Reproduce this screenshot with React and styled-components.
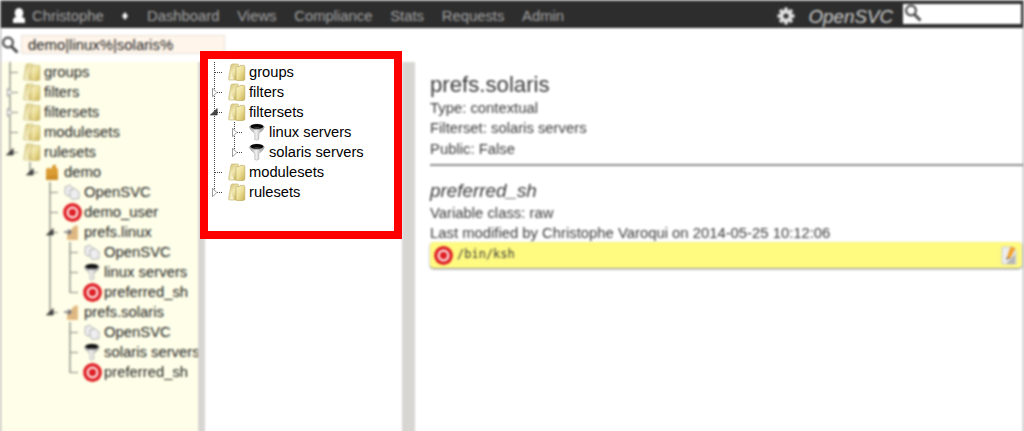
import React from "react";
import styled, { createGlobalStyle } from "styled-components";

const GlobalStyle = createGlobalStyle`
  * { box-sizing: border-box; }
  html, body { margin: 0; background: #fff; overflow: hidden; }
  body { font: 14.7px "Liberation Sans", Arial, sans-serif; color: #000; }
  svg { display: block; flex: none; }
`;

const Stage = styled.div`
  position: relative;
  width: 1024px;
  height: 431px;
  overflow: hidden;
`;

const Page = styled.div`
  display: flex;
  flex-direction: column;
  height: 436px;
  border: 1px solid #999;
  border-bottom: 0;
  background: #fff;
  color: #1c1c1c;
  font-size: 14.83px;
  filter: blur(1.25px);
`;

const Header = styled.header`
  display: flex;
  align-items: center;
  height: 27px;
  flex: none;
  padding: 2px 2px 0 11px;
  background: #2d2d2d;
  color: #a3a3a3;
`;

const UserName = styled.span`
  margin-left: 6px;
  width: 90px;
`;

const Nav = styled.nav`
  display: flex;
  flex: 1;
  gap: 17.7px;
  margin-left: 19px;
`;

const Brand = styled.span`
  margin: 2px 10px 0 13px;
  font-size: 18.8px;
  font-style: italic;
  color: #ccc;
`;

const HeaderSearch = styled.div`
  width: 118px;
  height: 20px;
  margin-bottom: 3px;
  padding-left: 1px;
  background: #fff;
`;

const FilterBar = styled.div`
  display: flex;
  align-items: center;
  height: 34px;
  flex: none;
  gap: 2px;
`;

const FilterInput = styled.div`
  width: 204px;
  height: 19px;
  margin-bottom: 1px;
  padding: 0 6px;
  border: 1px solid #e9e1d8;
  background: #fff5ea;
  font-size: 14.9px;
  line-height: 18px;
`;

const Columns = styled.div`
  display: flex;
  flex: 1;
`;

const TreePane = styled.aside`
  width: 197px;
  padding-left: 1px;
  background: #ffffe9;
  white-space: nowrap;
`;

const Splitter = styled.div`
  width: ${(p) => p.$width}px;
  background: #d8d6d3;
`;

const MiddlePane = styled.div`
  width: 197px;
`;

const Details = styled.main`
  flex: 1;
  padding: 9px 0 0 15px;
  color: #3a3a3a;
`;

const Title = styled.h1`
  margin: 0;
  height: 27px;
  font-size: 22.2px;
  line-height: 27px;
  font-weight: normal;
`;

const Line = styled.div`
  height: 20.3px;
  line-height: 20.3px;
`;

const Rule = styled.hr`
  margin: 5px 0 13px;
  border: 0;
  height: 2px;
  background: #8e8e8e;
`;

const Subtitle = styled.h2`
  margin: 0;
  height: 24px;
  font-size: 18.85px;
  line-height: 24px;
  font-style: italic;
  font-weight: normal;
`;

const ValueBar = styled.div`
  display: flex;
  align-items: center;
  justify-content: space-between;
  height: 26px;
  margin: -1px 1px 0 0;
  padding: 0 4px 0 4px;
  border-radius: 4px;
  background: #fffa80;
  box-shadow: 0 1px 2px #777;
`;

const Value = styled.div`
  display: flex;
  gap: 4px;
  font: 12px/17px "DejaVu Sans Mono", monospace;
`;

const Spotlight = styled.section`
  position: absolute;
  left: 200px;
  top: 51px;
  width: 202px;
  height: 188px;
  padding-top: 3px;
  border: 8px solid #f00;
  background: #fff;
`;

const TreeList = styled.div`
  margin-left: ${(p) => p.$offset || 0}px;
`;

const Row = styled.div`
  display: flex;
  align-items: center;
  height: 20px;
`;

const IconCell = styled.span`
  display: flex;
  flex: none;
  justify-content: center;
  width: 20px;
  margin-right: 2px;
`;

const Label = styled.span`
  line-height: 20px;
`;

const UserIcon = () => (
  <svg width="14" height="16" viewBox="0 0 14 16" fill="#fff">
    <ellipse cx="7" cy="5" rx="4.3" ry="5" />
    <path d="M1 15V12Q1 9 5 9H9Q13 9 13 12V15Z" />
  </svg>
);

const Diamond = () => (
  <svg width="6" height="8" viewBox="0 0 6 8"><path d="M3 0L6 4L3 8L0 4Z" fill="#f4f4f4" /></svg>
);

const Gear = () => (
  <svg width="18" height="18" viewBox="0 0 18 18">
    <g stroke="#e2e2e2" strokeWidth="3.6">
      <path d="M9 0.5V17.5M0.5 9H17.5M3 3L15 15M15 3L3 15" />
    </g>
    <circle cx="9" cy="9" r="6.3" fill="#e2e2e2" />
    <circle cx="9" cy="9" r="2.6" fill="#333" />
  </svg>
);

const Magnifier = () => (
  <svg width="18" height="18" viewBox="0 0 18 18" fill="none" stroke="#4a4a4a">
    <circle cx="7" cy="6.5" r="4.9" strokeWidth="2.2" />
    <path d="M10.5 10.5L16.5 16.5" strokeWidth="3" />
  </svg>
);

const Gradients = () => (
  <svg width="0" height="0" style={{ position: "absolute" }}>
    <defs>
      <linearGradient id="folderFront" x1="0" y1="0" x2="1" y2="1">
        <stop offset="0" stopColor="#fbf5cb" />
        <stop offset="0.5" stopColor="#eddf98" />
        <stop offset="1" stopColor="#c7b152" />
      </linearGradient>
      <linearGradient id="folderBack" x1="0" y1="0" x2="0.6" y2="1">
        <stop offset="0" stopColor="#d0be70" />
        <stop offset="0.55" stopColor="#f1e8b2" />
        <stop offset="1" stopColor="#cfbc6c" />
      </linearGradient>
      <linearGradient id="funnelMetal" x1="0" y1="0" x2="1" y2="0">
        <stop offset="0" stopColor="#999" />
        <stop offset="0.45" stopColor="#f2f2f2" />
        <stop offset="1" stopColor="#858585" />
      </linearGradient>
    </defs>
  </svg>
);

const Folder = () => (
  <svg width="18" height="20" viewBox="0 0 18 20">
    <path d="M2.8 4Q2.8 2 4.4 2H9.2Q10.6 2 10.6 3.2V16.6L8.6 18H1.6Q0.4 18 0.6 16.6Z" fill="url(#folderBack)" stroke="#cbbb7c" strokeWidth="0.7" />
    <path d="M1.4 17.4L3.7 12L6 17.6Z" fill="#f6f0cf" />
    <path d="M8 5.6Q8 4.6 9 4.6H11.2L12.2 3.4H15.6Q16.8 3.4 16.8 4.6V16.8Q16.8 18.5 15.2 18.5H9.2Q8 18.5 8 17.2Z" fill="url(#folderFront)" stroke="#bfae62" strokeWidth="0.7" />
  </svg>
);

const Funnel = () => (
  <svg width="18" height="20" viewBox="0 0 18 20">
    <path d="M1.4 5Q2 8 6.8 11.5V17.6Q8.8 19 10.8 17.2V11.5Q15.8 8 16.4 5Z" fill="url(#funnelMetal)" stroke="#a5a5a5" strokeWidth="0.5" />
    <ellipse cx="8.9" cy="4.8" rx="7.4" ry="3" fill="#a8a8a8" />
    <ellipse cx="8.9" cy="4.5" rx="6.4" ry="2.4" fill="#080808" />
    <path d="M5 6Q8.9 4.4 12.8 6Q9 7.4 5 6Z" fill="#4c4c4c" />
  </svg>
);

const Target = () => (
  <svg width="19" height="19" viewBox="0 0 19 19">
    <circle cx="9.5" cy="9.5" r="9.4" fill="#e02026" />
    <circle cx="9.5" cy="9.5" r="4.8" fill="none" stroke="#fff" strokeOpacity="0.9" strokeWidth="2.2" />
  </svg>
);

const Copies = () => (
  <svg width="16" height="18" viewBox="0 0 16 18" fill="#eeeef0" stroke="#aaa" strokeWidth="0.9">
    <path d="M1 4L6 2L9 5V12L3 13L1 11Z" />
    <path d="M6 7L11 5.5L15 9V15.5L8 16.5L6 14Z" />
  </svg>
);

const Ruleset = () => (
  <svg width="14" height="18" viewBox="0 0 14 18">
    <path d="M1 6L4 4.5L6 6L7 5V2.5L11 1.5V4.5L13 6V17H1Z" fill="#dc9c34" />
    <path d="M1 13L13 12V17H1Z" fill="#cd8e2b" />
  </svg>
);

const LinkedRuleset = () => (
  <svg width="16" height="18" viewBox="0 0 16 18">
    <path d="M3 9L7 7L8 5L12 2L14 3V17H3Z" fill="#e5bd84" />
    <path d="M7 7V16M10.5 5V16" stroke="#cfa87c" />
    <path d="M0 9H6M4 6.5L7 9L4 11.5" fill="none" stroke="#6e7180" strokeWidth="1.6" />
  </svg>
);

const EditIcon = () => (
  <svg width="17" height="19" viewBox="0 0 17 19">
    <path d="M1 1H12L15 5V18H1Z" fill="#eee" stroke="#ccc" />
    <path d="M5 18L14 8V18Z" fill="#b5b5b5" />
    <path d="M5 14L9.5 1L14.5 2L9.5 12Z" fill="#f0a028" />
    <path d="M5 14L6 11L9 12Z" fill="#777" />
  </svg>
);

const ICONS = {
  folder: Folder,
  funnel: Funnel,
  target: Target,
  copies: Copies,
  ruleset: Ruleset,
  linked: LinkedRuleset,
};

const Guide = ({ through, branch, toggle, soft }) => {
  const line = soft
    ? { stroke: "#8f8f8a", strokeWidth: 1.4 }
    : { stroke: "#444", strokeDasharray: "1 1" };
  const x = soft ? 8 : 7.5;
  return (
    <svg width="20" height="20" viewBox="0 0 20 20">
      {(through || branch) && <path d={`M${x} 0V${through ? 20 : 11}`} {...line} />}
      {branch && <path d="M8 10.5H16" {...line} strokeOpacity={soft ? 0.8 : 1} />}
      {toggle === "closed" && (
        <path d="M5.5 6.2L9.8 10.5L5.5 14.8Z" fill="#fff" stroke="#999" />
      )}
      {toggle === "open" && (
        <path
          d="M10.2 6.5V13H3.3Z"
          transform={soft ? "translate(1 0)" : undefined}
          fill="#444"
          stroke="#333"
          strokeWidth="0.6"
        />
      )}
    </svg>
  );
};

const Tree = ({ nodes, trail = [], soft }) =>
  nodes.map((node, i) => {
    const more = i < nodes.length - 1;
    const Icon = ICONS[node.icon];
    return (
      <React.Fragment key={i}>
        <Row>
          {trail.map((t, d) => <Guide key={d} through={t} soft={soft} />)}
          <Guide
            through={more}
            branch
            soft={soft}
            toggle={node.children ? "open" : node.closed && "closed"}
          />
          <IconCell><Icon /></IconCell>
          <Label>{node.label}</Label>
        </Row>
        {node.children && <Tree nodes={node.children} trail={[...trail, more]} soft={soft} />}
      </React.Fragment>
    );
  });

const RULE_TREE = [
  { label: "groups", icon: "folder" },
  { label: "filters", icon: "folder", closed: true },
  { label: "filtersets", icon: "folder", closed: true },
  { label: "modulesets", icon: "folder" },
  {
    label: "rulesets",
    icon: "folder",
    children: [
      {
        label: "demo",
        icon: "ruleset",
        children: [
          { label: "OpenSVC", icon: "copies" },
          { label: "demo_user", icon: "target" },
          {
            label: "prefs.linux",
            icon: "linked",
            children: [
              { label: "OpenSVC", icon: "copies" },
              { label: "linux servers", icon: "funnel" },
              { label: "preferred_sh", icon: "target" },
            ],
          },
          {
            label: "prefs.solaris",
            icon: "linked",
            children: [
              { label: "OpenSVC", icon: "copies" },
              { label: "solaris servers", icon: "funnel" },
              { label: "preferred_sh", icon: "target" },
            ],
          },
        ],
      },
    ],
  },
];

const FILTER_TREE = [
  { label: "groups", icon: "folder" },
  { label: "filters", icon: "folder", closed: true },
  {
    label: "filtersets",
    icon: "folder",
    children: [
      { label: "linux servers", icon: "funnel", closed: true },
      { label: "solaris servers", icon: "funnel", closed: true },
    ],
  },
  { label: "modulesets", icon: "folder" },
  { label: "rulesets", icon: "folder", closed: true },
];

const MENU = ["Dashboard", "Views", "Compliance", "Stats", "Requests", "Admin"];

export default function App() {
  return (
    <Stage>
      <GlobalStyle />
      <Gradients />
      <Page>
        <Header>
          <UserIcon />
          <UserName>Christophe</UserName>
          <Diamond />
          <Nav>{MENU.map((m) => <span key={m}>{m}</span>)}</Nav>
          <Gear />
          <Brand>OpenSVC</Brand>
          <HeaderSearch><Magnifier /></HeaderSearch>
        </Header>
        <FilterBar>
          <Magnifier />
          <FilterInput>demo|linux%|solaris%</FilterInput>
        </FilterBar>
        <Columns>
          <TreePane><Tree nodes={RULE_TREE} soft /></TreePane>
          <Splitter $width={7} />
          <MiddlePane />
          <Splitter $width={13} />
          <Details>
            <Title>prefs.solaris</Title>
            <Line>Type: contextual</Line>
            <Line>Filterset: solaris servers</Line>
            <Line>Public: False</Line>
            <Rule />
            <Subtitle>preferred_sh</Subtitle>
            <Line>Variable class: raw</Line>
            <Line>Last modified by Christophe Varoqui on 2014-05-25 10:12:06</Line>
            <ValueBar>
              <Value><Target />/bin/ksh</Value>
              <EditIcon />
            </ValueBar>
          </Details>
        </Columns>
      </Page>
      <Spotlight>
        <TreeList $offset={-1}><Tree nodes={FILTER_TREE} /></TreeList>
      </Spotlight>
    </Stage>
  );
}
